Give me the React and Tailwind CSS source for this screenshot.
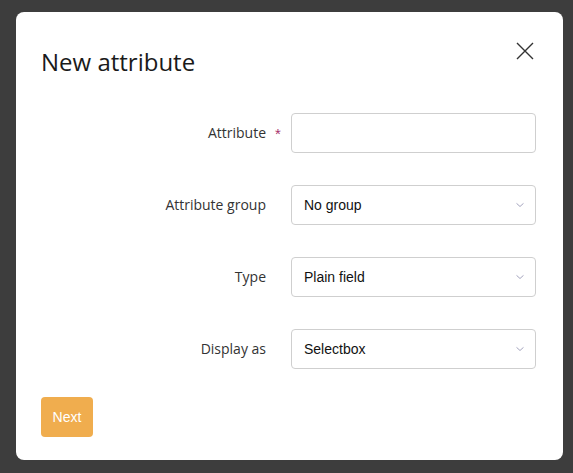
import React from 'react'

const labelFont = { fontFamily: '"Open Sans", "Noto Sans", sans-serif' }
const fieldFont = { fontFamily: '"Liberation Sans", Arial, sans-serif' }

function Chevron() {
  return (
    <svg width="8" height="5" viewBox="0 0 8 5" className="absolute right-[11px] top-1/2 -translate-y-1/2">
      <path d="M0.5 0.8 L4 4 L7.5 0.8" fill="none" stroke="#a3a3bd" strokeWidth="1" />
    </svg>
  )
}

function Row({ label, required, children }) {
  return (
    <div className="flex items-center">
      <div className="relative w-[225px] -translate-y-[1px] text-right text-[14px] text-[#333]" style={labelFont}>
        {label}
        {required && (
          <span className="absolute left-[234px] top-[1px] text-[15px] text-[#a8336c]" style={fieldFont}>*</span>
        )}
      </div>
      <div className="ml-[25px] w-[245px]">{children}</div>
    </div>
  )
}

function Select({ value }) {
  return (
    <div
      className="relative flex h-[40px] items-center rounded-[4px] border border-[#cfcfcf] bg-white pl-[12px] text-[14px] text-[#111]"
      style={fieldFont}
    >
      {value}
      <Chevron />
    </div>
  )
}

export default function App() {
  return (
    <div className="h-[473px] w-[573px] bg-[#3d3d3d] pl-[16px] pt-[12px]">
      <div className="relative h-[448px] w-[547px] rounded-[8px] bg-white pl-[25px] pt-[34px]">
        {/* close */}
        <button className="absolute right-[29px] top-[30px]">
          <svg width="18" height="18" viewBox="0 0 18 18">
            <path d="M1 1 L17 17 M17 1 L1 17" stroke="#333" strokeWidth="1.4" fill="none" />
          </svg>
        </button>

        <h2 className="h-[32px] text-[24px] leading-[32px] text-[#1a1a1a]" style={labelFont}>
          New attribute
        </h2>

        <div className="mt-[35px] flex flex-col gap-[32px]">
          <Row label="Attribute" required>
            <input
              className="block h-[40px] w-full rounded-[4px] border border-[#cfcfcf] px-[12px] text-[14px] outline-none"
              style={fieldFont}
            />
          </Row>
          <Row label="Attribute group">
            <Select value="No group" />
          </Row>
          <Row label="Type">
            <Select value="Plain field" />
          </Row>
          <Row label="Display as">
            <Select value="Selectbox" />
          </Row>
        </div>

        <button
          className="mt-[28px] h-[40px] w-[52px] rounded-[4px] bg-[#f0ad4e] text-[14px] text-white"
          style={fieldFont}
        >
          Next
        </button>
      </div>
    </div>
  )
}
